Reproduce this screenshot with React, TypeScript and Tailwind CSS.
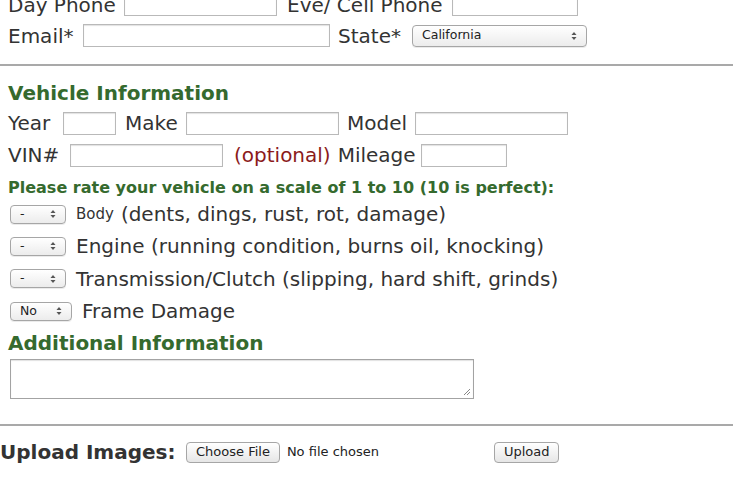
const font = { fontFamily: '"DejaVu Sans", Verdana, sans-serif' };

const Input = ({ w }: { w: string }) => (
  <div className={`h-[23px] ${w} shrink-0 border border-[#b9b9b9] bg-white shadow-[inset_0_1px_1px_rgba(0,0,0,0.12)]`} />
);

const Arrows = () => (
  <svg width="6" height="10" viewBox="0 0 6 10" className="shrink-0">
    <path d="M3 1 L5.5 4 H0.5 Z" fill="#555" />
    <path d="M3 9 L5.5 6 H0.5 Z" fill="#555" />
  </svg>
);

const Select = ({ label, w, h = 'h-[19px]' }: { label: string; w: string; h?: string }) => (
  <div
    className={`flex ${h} ${w} shrink-0 items-center justify-between rounded-[4px] border border-[#a6a6a6] bg-gradient-to-b from-white to-[#ececec] pl-[9px] pr-[9px] text-[12.5px] text-[#222] shadow-[0_1px_0_rgba(0,0,0,0.08)]`}
  >
    <span>{label}</span>
    <Arrows />
  </div>
);

const Button = ({ children }: { children: string }) => (
  <div className="flex h-[21px] shrink-0 items-center rounded-[4px] border border-[#a6a6a6] bg-gradient-to-b from-white to-[#e6e6e6] px-[9px] text-[13px] text-[#222]">
    {children}
  </div>
);

const Heading = ({ children }: { children: string }) => (
  <div className="flex h-[32px] items-center whitespace-nowrap pl-2 text-[20px] font-bold text-[#356a2e]">{children}</div>
);

const Label = ({ w, className = '', children }: { w?: string; className?: string; children: string }) => (
  <span className={`shrink-0 whitespace-nowrap ${w ?? ''} ${className}`}>{children}</span>
);

export default function App() {
  return (
    <div className="h-[490px] w-[736px] overflow-hidden bg-white text-[20px] text-[#333]" style={font}>
      <div className="-mt-[11px]">
        <div className="flex h-[31px] items-center gap-[9px] pl-2">
          <Label w="w-[107px]">Day Phone</Label>
          <Input w="w-[153px]" />
          <Label w="w-[156px]" className="ml-[1px]">Eve/ Cell Phone</Label>
          <Input w="w-[126px]" />
        </div>
        <div className="flex h-[31px] items-center pl-2">
          <Label w="w-[75px]">Email*</Label>
          <Input w="w-[247px]" />
          <Label w="w-[74px]" className="ml-[8px]">State*</Label>
          <Select label="California" w="w-[175px]" h="h-[22px]" />
        </div>
        <div className="mt-[13px] mr-[3px] h-[2px] border-t-2 border-[#a9a9a9]" />
        <div className="mt-[11px]">
          <Heading>Vehicle Information</Heading>
        </div>
        <div className="-mt-[2px] flex h-[32px] items-center pl-2">
          <Label w="w-[55px]">Year</Label>
          <Input w="w-[53px]" />
          <Label w="w-[61px]" className="ml-[9px]">Make</Label>
          <Input w="w-[153px]" />
          <Label w="w-[68px]" className="ml-[8px]">Model</Label>
          <Input w="w-[153px]" />
        </div>
        <div className="flex h-[32px] items-center pl-2">
          <Label w="w-[62px]">VIN#</Label>
          <Input w="w-[153px]" />
          <Label className="ml-[11px] text-[#8b1a1a]">(optional)</Label>
          <Label w="w-[83px]" className="ml-[7px]">Mileage</Label>
          <Input w="w-[86px]" />
        </div>
        <div className="mt-[2px] flex h-[30px] items-center whitespace-nowrap pl-2 text-[16px] font-bold text-[#356a2e]">
          Please rate your vehicle on a scale of 1 to 10 (10 is perfect):
        </div>
        <div className="-mt-[5px] flex h-[32px] items-center pl-[10px]">
          <Select label="-" w="w-[56px]" />
          <Label className="ml-[10px] text-[15px]">Body</Label>
          <Label className="ml-[7px]">(dents, dings, rust, rot, damage)</Label>
        </div>
        <div className="flex h-[32px] items-center pl-[10px]">
          <Select label="-" w="w-[56px]" />
          <Label className="ml-[10px]">Engine (running condition, burns oil, knocking)</Label>
        </div>
        <div className="flex h-[33px] items-center pl-[10px]">
          <Select label="-" w="w-[56px]" />
          <Label className="ml-[10px]">Transmission/Clutch (slipping, hard shift, grinds)</Label>
        </div>
        <div className="flex h-[32px] items-center pl-[10px]">
          <Select label="No" w="w-[62px]" />
          <Label className="ml-[10px]">Frame Damage</Label>
        </div>
        <Heading>Additional Information</Heading>
        <div className="pl-[10px]">
          <div className="relative h-[40px] w-[464px] border border-[#a3a3a3] bg-white shadow-[inset_0_1px_1px_rgba(0,0,0,0.12)]">
            <svg width="8" height="8" viewBox="0 0 8 8" className="absolute bottom-[2px] right-[2px]">
              <path d="M1 7 L7 1 M4 7 L7 4" stroke="#888" strokeWidth="1" />
            </svg>
          </div>
        </div>
        <div className="mt-[25px] mr-[3px] h-[2px] border-t-2 border-[#a9a9a9]" />
        <div className="mt-[14px] flex h-[24px] items-center">
          <Label w="w-[186px]" className="text-[20px] font-bold text-[#333]">Upload Images:</Label>
          <Button>Choose File</Button>
          <Label w="w-[207px]" className="ml-[7px] text-[13px] text-[#222]">No file chosen</Label>
          <Button>Upload</Button>
        </div>
      </div>
    </div>
  );
}
